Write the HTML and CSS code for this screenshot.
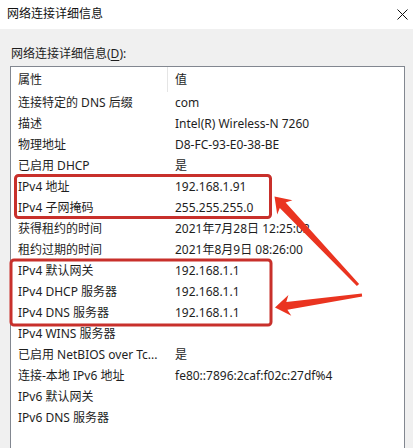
FILE: index.html
```html
<!DOCTYPE html>
<html lang="zh-CN">
<head>
<meta charset="utf-8">
<title>网络连接详细信息</title>
<link rel="stylesheet" href="styles.css">
</head>
<body>
<div class="window">
  <div class="titlebar">
    <span class="title">网络连接详细信息</span>
    <svg class="close" width="11" height="11" viewBox="0 0 11 11"><path d="M0.5 0.5 L10.5 10.5 M10.5 0.5 L0.5 10.5" stroke="#111" stroke-width="1" fill="none"/></svg>
  </div>
  <div class="content">
    <div class="label">网络连接详细信息(<u>D</u>):</div>
    <div class="listbox">
      <div class="row head"><div class="c1">属性</div><div class="c2">值</div></div>
      <div class="row"><div class="c1">连接特定的 DNS 后缀</div><div class="c2">com</div></div>
      <div class="row"><div class="c1">描述</div><div class="c2">Intel(R) Wireless-N 7260</div></div>
      <div class="row"><div class="c1">物理地址</div><div class="c2">D8-FC-93-E0-38-BE</div></div>
      <div class="row"><div class="c1">已启用 DHCP</div><div class="c2">是</div></div>
      <div class="row"><div class="c1">IPv4 地址</div><div class="c2">192.168.1.91</div></div>
      <div class="row"><div class="c1">IPv4 子网掩码</div><div class="c2">255.255.255.0</div></div>
      <div class="row"><div class="c1">获得租约的时间</div><div class="c2">2021年7月28日 12:25:02</div></div>
      <div class="row"><div class="c1">租约过期的时间</div><div class="c2">2021年8月9日 08:26:00</div></div>
      <div class="row"><div class="c1">IPv4 默认网关</div><div class="c2">192.168.1.1</div></div>
      <div class="row"><div class="c1">IPv4 DHCP 服务器</div><div class="c2">192.168.1.1</div></div>
      <div class="row"><div class="c1">IPv4 DNS 服务器</div><div class="c2">192.168.1.1</div></div>
      <div class="row"><div class="c1">IPv4 WINS 服务器</div><div class="c2"></div></div>
      <div class="row"><div class="c1">已启用 NetBIOS over Tc...</div><div class="c2">是</div></div>
      <div class="row"><div class="c1">连接-本地 IPv6 地址</div><div class="c2">fe80::7896:2caf:f02c:27df%4</div></div>
      <div class="row"><div class="c1">IPv6 默认网关</div><div class="c2"></div></div>
      <div class="row"><div class="c1">IPv6 DNS 服务器</div><div class="c2"></div></div>
    </div>
  </div>
  <svg class="annot" width="413" height="448" viewBox="0 0 413 448">
    <rect x="15.5" y="175.5" width="255" height="42" rx="3" fill="none" stroke="#c8302b" stroke-width="3"/>
    <rect x="11" y="260" width="260" height="65" rx="3" fill="none" stroke="#c8302b" stroke-width="3"/>
    <polygon fill="#ea3420" points="274.5,196.5 292.4,200.2 285.6,202.5 359.1,284 356.9,286 279.8,208 277.2,214.6"/>
    <polygon fill="#ea3420" points="275,307.5 288.4,295 286.3,301.9 361.8,293.5 362.2,296.5 287.4,309.8 291.3,315.8"/>
  </svg>
</div>
</body>
</html>
```
FILE: styles.css
```css
html, body {
  margin: 0;
  padding: 0;
}
body {
  width: 413px;
  height: 448px;
  overflow: hidden;
  background: #f0f0f0;
  font-family: "Noto Sans", "Noto Sans CJK SC", sans-serif;
  font-size: 12px;
  color: #1e1e1e;
}
.window {
  position: relative;
  width: 413px;
  height: 448px;
  overflow: hidden;
}
.titlebar {
  height: 29px;
  background: #ffffff;
  display: flex;
  align-items: center;
  justify-content: space-between;
  padding: 0 5px 0 7px;
  box-sizing: border-box;
}
.title {
  font-size: 12px;
  line-height: 16px;
  color: #111;
  margin-top: -1px;
}
.close {
  display: block;
  margin-top: -1px;
}
.content {
  padding: 0 0 0 10px;
}
.label {
  height: 37px;
  line-height: 16px;
  padding-top: 17px;
  box-sizing: border-box;
  padding-left: 1px;
}
.label u {
  text-decoration-thickness: 1px;
  text-underline-offset: 2px;
}
.listbox {
  width: 395px;
  height: 420px;
  box-sizing: border-box;
  border: 1px solid #828790;
  background: #ffffff;
}
.row {
  display: grid;
  grid-template-columns: 157px 1fr;
  height: 21px;
  line-height: 21px;
  white-space: nowrap;
}
.row.head {
  height: 25px;
  line-height: 25px;
}
.c1 {
  padding-left: 7px;
  overflow: hidden;
}
.c2 {
  padding-left: 7px;
  overflow: hidden;
}
.row.head .c1 {
  border-right: 1px solid #e5e5e5;
}
.annot {
  position: absolute;
  left: 0;
  top: 0;
  pointer-events: none;
}
```
